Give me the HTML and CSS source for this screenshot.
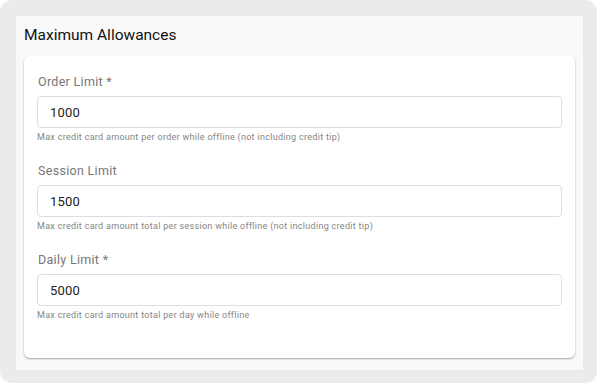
FILE: index.html
```html
<!DOCTYPE html>
<html lang="en">
  <head>
    <meta charset="UTF-8" />
    <meta name="viewport" content="width=device-width, initial-scale=1.0" />
    <title>Maximum Allowances</title>
    <link rel="stylesheet" href="styles.css">
  </head>
  <body>
    <div class="frame">
      <section class="panel">
        <h2 class="panel-title">Maximum Allowances</h2>
        <div class="card">
          <div class="field">
            <label class="field-label">Order Limit *</label>
            <input class="field-input" type="text" value="1000">
            <p class="field-help">Max credit card amount per order while offline (not including credit tip)</p>
          </div>
          <div class="field">
            <label class="field-label">Session Limit</label>
            <input class="field-input" type="text" value="1500">
            <p class="field-help">Max credit card amount total per session while offline (not including credit tip)</p>
          </div>
          <div class="field">
            <label class="field-label">Daily Limit *</label>
            <input class="field-input" type="text" value="5000">
            <p class="field-help">Max credit card amount total per day while offline</p>
          </div>
        </div>
      </section>
    </div>
  </body>
</html>
```

FILE: styles.css
```css
*,
*::after,
*::before {
  box-sizing: border-box;
}
body {
  margin: 0;
  background: #fff;
  font-family: Roboto, "Liberation Sans", sans-serif;
}
.frame {
  width: 597px;
  height: 383px;
  background: #ebebe9;
  border-radius: 12px;
  padding: 16px 14px 13px 16px;
}
.panel {
  height: 100%;
  background: #f9f9f9;
  padding: 8px 8px 12px 8px;
}
.panel-title {
  margin: 0 0 10px;
  font-size: 15.5px;
  font-weight: 400;
  line-height: 22px;
  color: #111;
}
.card {
  background: #fff;
  border-radius: 6px;
  box-shadow: 0 1px 2px rgba(0, 0, 0, 0.35);
  padding: 16px 13px 36px 13px;
}
.field {
  margin-bottom: 17px;
}
.field:last-child {
  margin-bottom: 0;
}
.field-label {
  display: block;
  font-size: 12.5px;
  line-height: 20px;
  color: #777;
  letter-spacing: 0.3px;
  margin-bottom: 4px;
  padding-left: 1px;
}
.field-input {
  display: block;
  width: 100%;
  height: 32px;
  border: 1px solid #dedede;
  border-radius: 4px;
  padding: 0 12px;
  font-family: inherit;
  font-size: 13px;
  letter-spacing: 0.2px;
  color: #222;
  outline: none;
}
.field-help {
  margin: 2px 0 0;
  font-size: 9px;
  line-height: 14px;
  color: #858585;
  letter-spacing: 0.3px;
}
```
